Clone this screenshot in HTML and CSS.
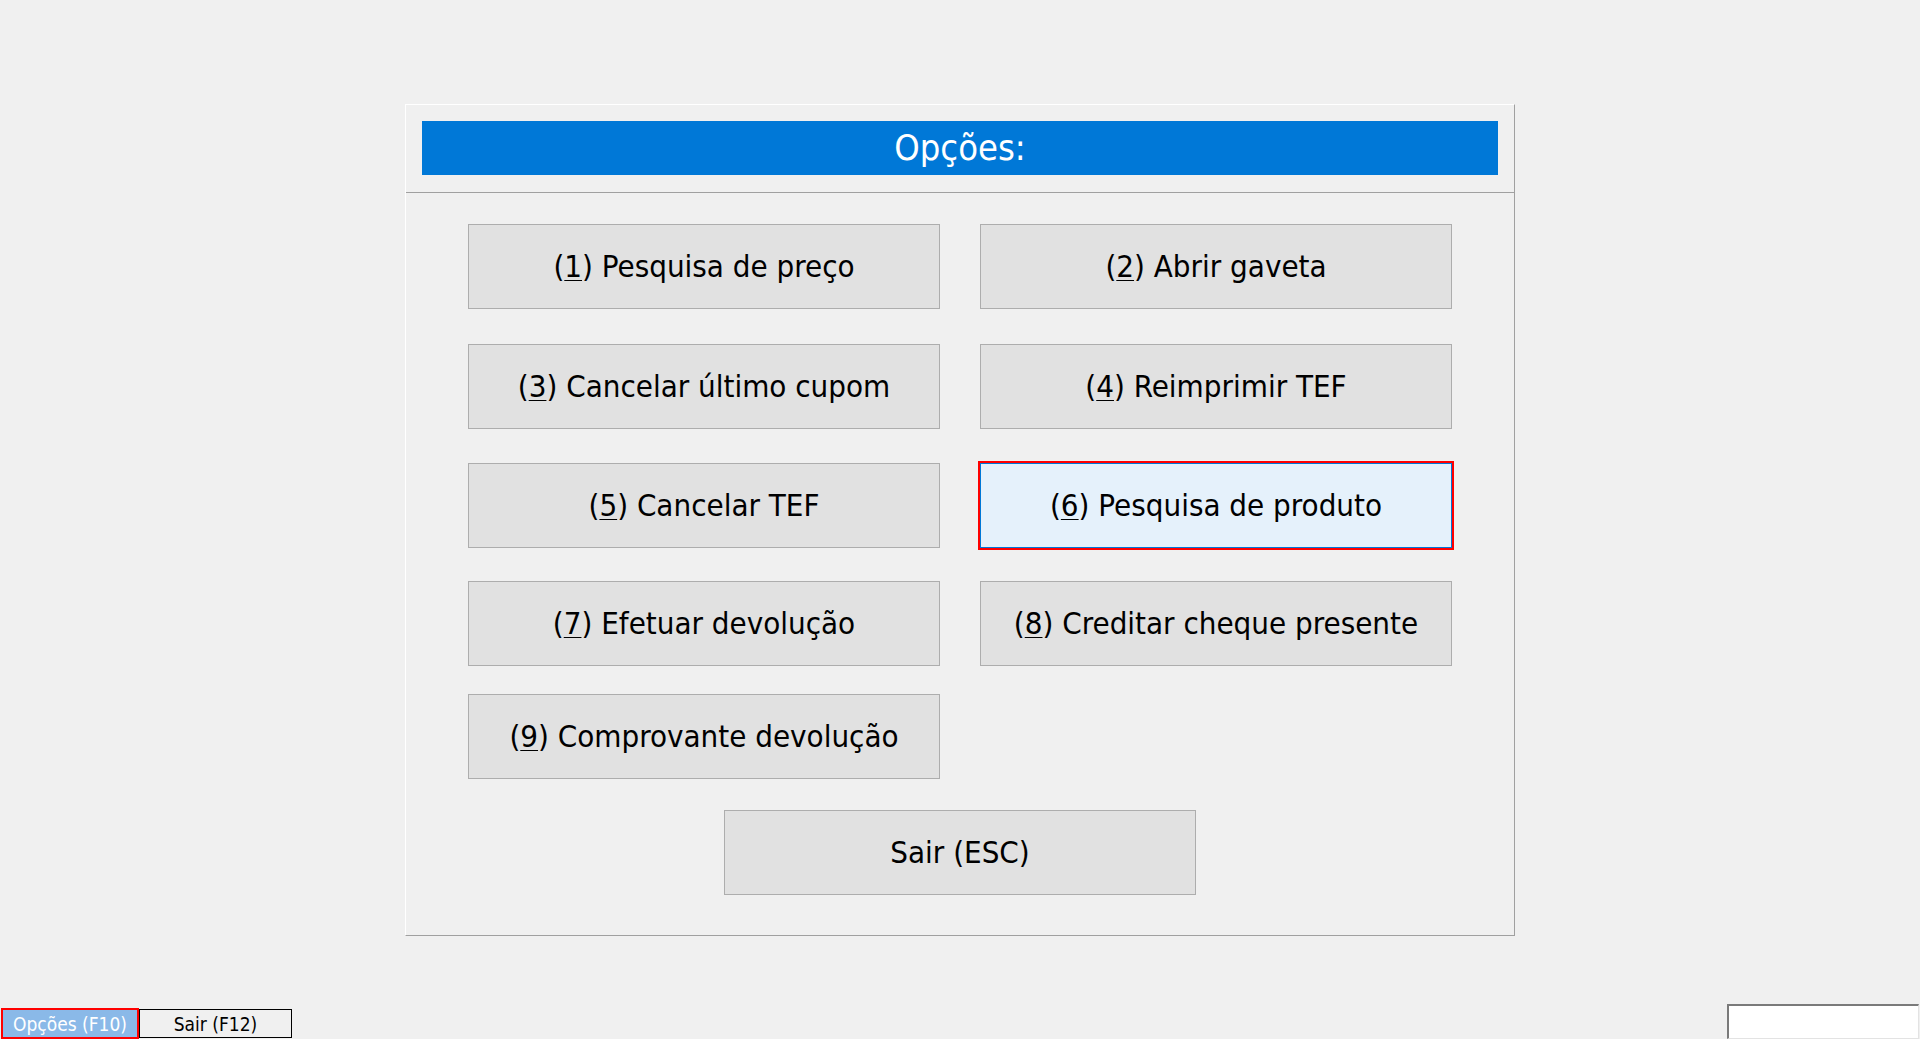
FILE: index.html
```html
<!DOCTYPE html>
<html lang="pt-BR">
<head>
    <meta charset="UTF-8">
    <meta name="viewport" content="width=device-width, initial-scale=1.0">
    <title>Opções</title>
    <link rel="stylesheet" href="styles.css">
</head>
<body>
    <section class="dialog">
        <header class="dialog-header">
            <h1 class="dialog-title">Opções:</h1>
        </header>

        <div class="options">
            <div class="options-row row-1">
                <button class="option">(<u>1</u>) Pesquisa de preço</button>
                <button class="option">(<u>2</u>) Abrir gaveta</button>
            </div>
            <div class="options-row row-2">
                <button class="option">(<u>3</u>) Cancelar último cupom</button>
                <button class="option">(<u>4</u>) Reimprimir TEF</button>
            </div>
            <div class="options-row row-3">
                <button class="option">(<u>5</u>) Cancelar TEF</button>
                <button class="option focused">(<u>6</u>) Pesquisa de produto</button>
            </div>
            <div class="options-row row-4">
                <button class="option">(<u>7</u>) Efetuar devolução</button>
                <button class="option">(<u>8</u>) Creditar cheque presente</button>
            </div>
            <div class="options-row row-5">
                <button class="option">(<u>9</u>) Comprovante devolução</button>
            </div>
            <div class="exit-row">
                <button class="option exit">Sair (ESC)</button>
            </div>
        </div>
    </section>

    <footer class="statusbar">
        <div class="shortcuts">
            <button class="shortcut active">Opções (F10)</button>
            <button class="shortcut">Sair (F12)</button>
        </div>
        <div class="status-field"></div>
    </footer>
</body>
</html>
```

FILE: styles.css
```css
body {
    margin: 0;
    height: 100vh;
    display: flex;
    flex-direction: column;
    background-color: #f0f0f0;
    font-family: "DejaVu Sans Condensed", "DejaVu Sans", sans-serif;
    font-stretch: condensed;
    color: #000;
}

.dialog {
    box-sizing: border-box;
    width: 1110px;
    margin: 104px auto 0;
    border: 1px solid;
    border-color: #ffffff #a0a0a0 #a0a0a0 #ffffff;
}

.dialog-header {
    padding: 16px 16px 17px;
    border-bottom: 1px solid #a0a0a0;
}

.dialog-title {
    margin: 0;
    height: 54px;
    line-height: 54px;
    background-color: #0078d7;
    color: #fff;
    font-size: 36px;
    font-weight: normal;
    text-align: center;
}

.options {
    padding: 31px 62px 40px;
}

.options-row {
    display: grid;
    grid-template-columns: 472px 472px;
    column-gap: 40px;
}

.row-2 { margin-top: 35px; }
.row-3 { margin-top: 34px; }
.row-4 { margin-top: 33px; }
.row-5 { margin-top: 28px; }

.exit-row {
    display: flex;
    justify-content: center;
    margin-top: 31px;
}

.option {
    box-sizing: border-box;
    width: 472px;
    height: 85px;
    padding: 0 0 2px;
    border: 1px solid #adadad;
    background-color: #e1e1e1;
    font-family: inherit;
    font-stretch: condensed;
    font-size: 31px;
    color: #000;
    cursor: pointer;
}

.option u {
    text-underline-offset: 3px;
    text-decoration-thickness: 1px;
}

.option.focused {
    border-color: #0078d7;
    background-color: #e5f1fb;
    outline: 2px solid #ff0000;
}

.statusbar {
    margin-top: auto;
    display: flex;
    justify-content: space-between;
    align-items: flex-end;
}

.shortcuts {
    display: flex;
    align-items: flex-end;
    padding: 0 0 1px 1px;
}

.shortcut {
    box-sizing: border-box;
    height: 29px;
    padding: 0;
    border: 1px solid #000;
    background-color: #f0f0f0;
    font-family: inherit;
    font-stretch: condensed;
    font-size: 19px;
    color: #000;
}

.shortcut.active {
    width: 138px;
    height: 31px;
    margin-bottom: -1px;
    border: 2px solid #ff0000;
    background-color: #8ab9e8;
    color: #fff;
}

.shortcut + .shortcut {
    width: 153px;
}

.status-field {
    box-sizing: border-box;
    width: 192px;
    height: 35px;
    margin: 0 1px 0 0;
    border: 1px solid;
    border-width: 2px 1px 1px 2px;
    border-color: #7a7a7a #e3e3e3 #e3e3e3 #7a7a7a;
    background-color: #fff;
}
```
